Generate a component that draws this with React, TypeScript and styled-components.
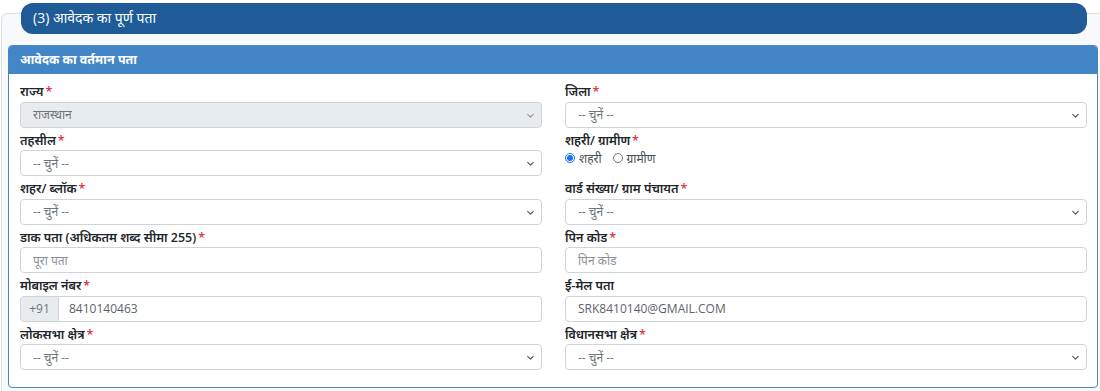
import React from 'react'
import styled, { createGlobalStyle } from 'styled-components'

const GlobalStyle = createGlobalStyle`
    body {
        margin: 0;
        background: #ffffff;
        font-family: 'Open Sans', 'Noto Sans', 'Noto Sans Devanagari', sans-serif;
        color: #212529;
        overflow: hidden;
    }
    * {
        box-sizing: border-box;
    }
`

type FieldDef = {
    label: string
    required?: boolean
    kind: 'select' | 'input' | 'radio' | 'phone'
    value?: string
    placeholder?: string
    disabled?: boolean
}

const rows: [FieldDef, FieldDef][] = [
    [
        { label: 'राज्य', required: true, kind: 'select', value: 'राजस्थान', disabled: true },
        { label: 'जिला', required: true, kind: 'select', value: '-- चुनें --' }
    ],
    [
        { label: 'तहसील', required: true, kind: 'select', value: '-- चुनें --' },
        { label: 'शहरी/ ग्रामीण', required: true, kind: 'radio' }
    ],
    [
        { label: 'शहर/ ब्लॉक', required: true, kind: 'select', value: '-- चुनें --' },
        { label: 'वार्ड संख्या/ ग्राम पंचायत', required: true, kind: 'select', value: '-- चुनें --' }
    ],
    [
        { label: 'डाक पता (अधिकतम शब्द सीमा 255)', required: true, kind: 'input', placeholder: 'पूरा पता' },
        { label: 'पिन कोड', required: true, kind: 'input', placeholder: 'पिन कोड' }
    ],
    [
        { label: 'मोबाइल नंबर', required: true, kind: 'phone', value: '8410140463' },
        { label: 'ई-मेल पता', kind: 'input', value: 'SRK8410140@GMAIL.COM' }
    ],
    [
        { label: 'लोकसभा क्षेत्र', required: true, kind: 'select', value: '-- चुनें --' },
        { label: 'विधानसभा क्षेत्र', required: true, kind: 'select', value: '-- चुनें --' }
    ]
]

const Chevron = ({ faded }: { faded?: boolean }) => (
    <ChevronIcon viewBox="0 0 16 16" width="9" height="9">
        <path
            d="M3 6l5 5 5-5"
            fill="none"
            stroke={faded ? '#8a9096' : '#495057'}
            strokeWidth="1.8"
            strokeLinecap="round"
            strokeLinejoin="round"
        />
    </ChevronIcon>
)

const Field = ({ field }: { field: FieldDef }) => {
    let control: React.ReactNode = null
    if (field.kind === 'select') {
        control = (
            <SelectWrap>
                <Select disabled={field.disabled} defaultValue={field.value}>
                    <option>{field.value}</option>
                </Select>
                <Chevron faded={field.disabled} />
            </SelectWrap>
        )
    } else if (field.kind === 'input') {
        control = <Input placeholder={field.placeholder} defaultValue={field.value} />
    } else if (field.kind === 'phone') {
        control = (
            <InputGroup>
                <Addon>+91</Addon>
                <GroupInput defaultValue={field.value} />
            </InputGroup>
        )
    } else {
        control = (
            <RadioRow>
                <RadioLabel>
                    <Radio type="radio" name="area" defaultChecked />
                    शहरी
                </RadioLabel>
                <RadioLabel>
                    <Radio type="radio" name="area" />
                    ग्रामीण
                </RadioLabel>
            </RadioRow>
        )
    }
    return (
        <FieldBox>
            <Label>
                {field.label}
                {field.required && <Star>*</Star>}
            </Label>
            {control}
        </FieldBox>
    )
}

const App = () => {
    return (
        <>
            <GlobalStyle />
            <Section>
                <Card>
                    <Pill>(3) आवेदक का पूर्ण पता</Pill>
                    <Panel>
                        <PanelHeader>आवेदक का वर्तमान पता</PanelHeader>
                        <PanelBody>
                            {rows.map((pair, i) => (
                                <Row key={i}>
                                    <Field field={pair[0]} />
                                    <Field field={pair[1]} />
                                </Row>
                            ))}
                        </PanelBody>
                    </Panel>
                </Card>
            </Section>
        </>
    )
}

const Section = styled.div`
    padding-top: 13px;
    padding-left: 1px;
    width: 1100px;
`

const Card = styled.div`
    width: 1120px;
    background: #f8f9fa;
    border: 1px solid #dcdfe3;
    border-radius: 6px;
    padding: 0 0 20px 6px;
`

const Pill = styled.div`
    margin: -11px 0 0 13px;
    width: 1066px;
    height: 31px;
    background: #1e5b97;
    border-radius: 12px;
    color: #ffffff;
    font-size: 14px;
    line-height: 30px;
    padding-left: 12px;
`

const Panel = styled.div`
    margin-top: 11px;
    width: 1090px;
    border: 1px solid #4d86bd;
    border-radius: 4px;
    background: #ffffff;
    overflow: hidden;
`

const PanelHeader = styled.div`
    height: 28px;
    background: #4386c8;
    color: #ffffff;
    font-size: 12.5px;
    font-weight: 700;
    line-height: 28px;
    padding-left: 11px;
`

const PanelBody = styled.div`
    padding: 5px 10px 16px 11px;
`

const Row = styled.div`
    display: grid;
    grid-template-columns: 522px 522px;
    column-gap: 23px;
`

const FieldBox = styled.div`
    display: flex;
    flex-direction: column;
    height: 48.6px;
`

const Label = styled.div`
    font-size: 12.5px;
    font-weight: 600;
    line-height: 16px;
    height: 20px;
    padding-top: 5px;
    margin-bottom: 2.5px;
    color: #212529;
`

const Star = styled.span`
    color: #dc3545;
    margin-left: 2px;
`

const SelectWrap = styled.div`
    position: relative;
    height: 26px;
`

const Select = styled.select`
    appearance: none;
    width: 100%;
    height: 26px;
    border: 1px solid #ced4da;
    border-radius: 4px;
    background: #ffffff;
    color: #6c757d;
    font-family: inherit;
    font-size: 12px;
    padding: 0 24px 0 12px;
    opacity: 1;

    &:disabled {
        background: #e9ecef;
        color: #6c757d;
    }
`

const ChevronIcon = styled.svg`
    position: absolute;
    right: 7px;
    top: 9px;
    pointer-events: none;
`

const Input = styled.input`
    width: 100%;
    height: 26px;
    border: 1px solid #ced4da;
    border-radius: 4px;
    background: #ffffff;
    color: #5c636a;
    font-family: inherit;
    font-size: 12px;
    padding: 0 12px;

    &::placeholder {
        color: #8a9096;
    }
`

const InputGroup = styled.div`
    display: flex;
    height: 26px;
`

const Addon = styled.div`
    width: 39px;
    display: flex;
    align-items: center;
    justify-content: center;
    background: #e9ecef;
    border: 1px solid #ced4da;
    border-radius: 4px 0 0 4px;
    color: #6c757d;
    font-size: 12px;
`

const GroupInput = styled(Input)`
    flex: 1;
    border-left: none;
    border-radius: 0 4px 4px 0;
    padding-left: 10px;
`

const RadioRow = styled.div`
    display: flex;
    gap: 11px;
    height: 14px;
    align-items: center;
    margin-top: 1px;
`

const RadioLabel = styled.label`
    display: flex;
    align-items: center;
    gap: 4px;
    font-size: 12px;
    color: #495057;
`

const Radio = styled.input`
    margin: 0;
    width: 10px;
    height: 10px;
    accent-color: #1a73e8;
`

export default App
